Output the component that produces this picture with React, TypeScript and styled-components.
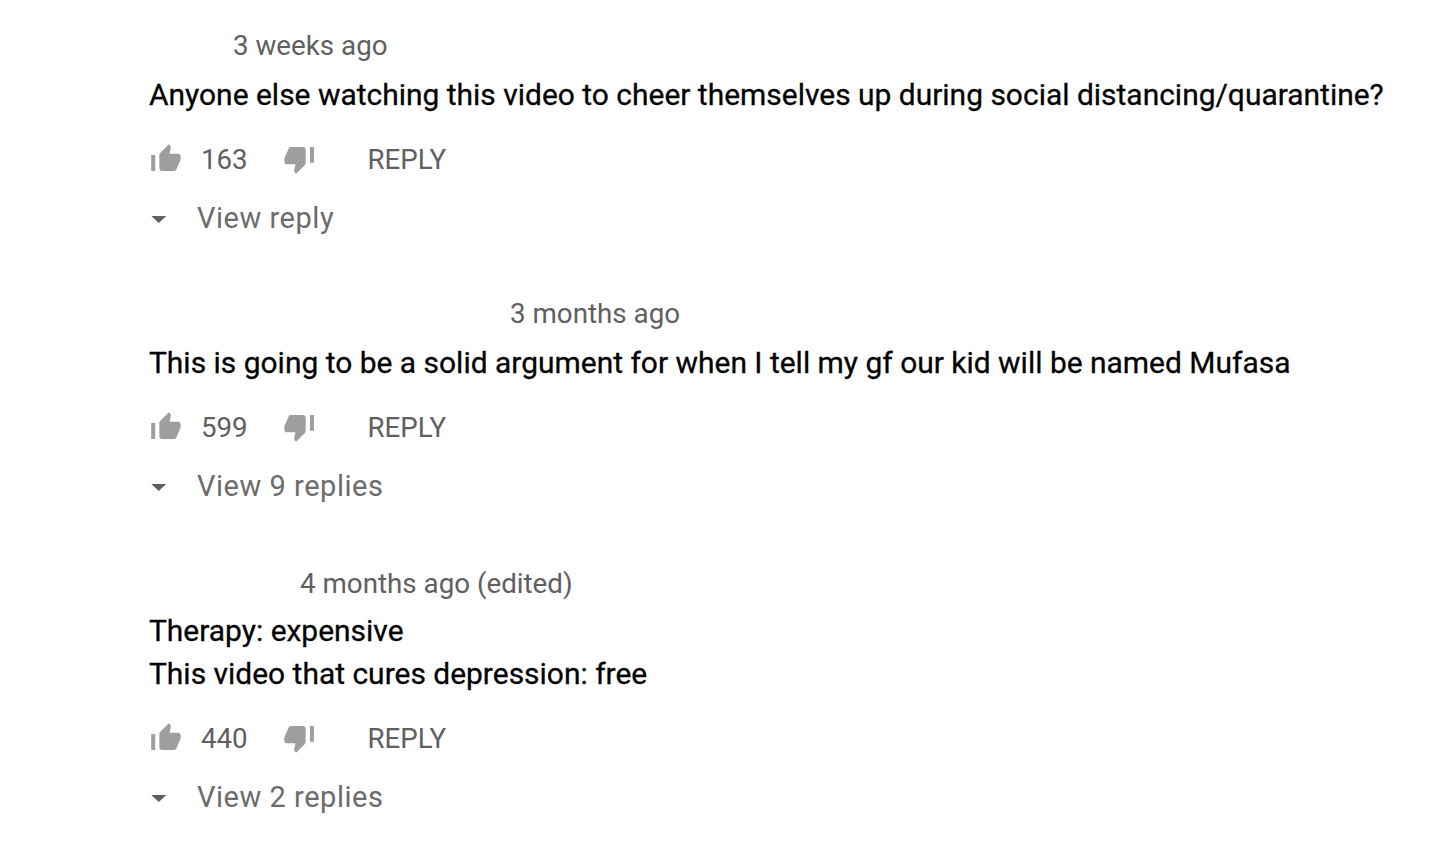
import React from 'react';
import styled, { createGlobalStyle } from 'styled-components';

const GlobalStyle = createGlobalStyle`
    body {
        margin: 0;
        background-color: #ffffff;
        font-family: Roboto, "Liberation Sans", sans-serif;
    }
`;

const CommentList = styled.main`
    box-sizing: border-box;
    width: 1442px;
    height: 848px;
    overflow: hidden;
    padding: 26px 0 0 149px;
`;

const CommentItem = styled.article<{ gap: number }>`
    margin-bottom: ${ props => props.gap }px;
`;

const CommentHeader = styled.header<{ indent: number }>`
    height: 40px;
    padding-left: ${ props => props.indent }px;
    color: #606060;
    font-size: 27.75px;
    line-height: 40px;
    white-space: nowrap;
`;

const CommentText = styled.p<{ offset: number }>`
    margin: ${ props => props.offset }px 0 0;
    color: #030303;
    font-size: 29.96px;
    line-height: 43px;
    white-space: pre;
    -webkit-text-stroke: 0.3px #030303;
`;

const Toolbar = styled.div`
    display: flex;
    align-items: center;
    height: 40px;
    margin-top: 23px;
    padding-left: 1px;
    color: #606060;
    font-size: 27.7px;
`;

const IconButton = styled.button`
    display: flex;
    width: 32px;
    height: 32px;
    padding: 0;
    border: 0;
    background: none;
    color: #9e9e9e;
`;

const LikeCount = styled.span`
    width: 101px;
    padding-left: 19px;
    box-sizing: border-box;
`;

const ReplyButton = styled.button`
    margin-left: 52.5px;
    padding: 0;
    border: 0;
    background: none;
    color: #606060;
    font: inherit;
`;

const RepliesButton = styled.button`
    display: flex;
    align-items: center;
    gap: 30px;
    height: 40px;
    margin-top: 19px;
    padding: 0 0 0 2px;
    border: 0;
    background: none;
    color: #6c6c6c;
    font: inherit;
    font-size: 29px;
    letter-spacing: 0.53px;
    white-space: nowrap;

    svg {
        margin-top: 3px;
    }
`;

const ThumbUp: React.FC = () => (
    <svg width="32" height="32" viewBox="0 0 24 24" fill="currentColor">
        <path d="M.9 21h3V9h-3v12zM23 10c0-1.1-.9-2-2-2h-6.31l.95-4.57.03-.32c0-.41-.17-.79-.44-1.06L14.17 1 7.59 7.59C7.22 7.95 7 8.45 7 9v10c0 1.1.9 2 2 2h9c.83 0 1.54-.5 1.84-1.22l3.02-7.05c.09-.23.14-.47.14-.73v-2z"/>
    </svg>
);

const ThumbDown: React.FC = () => (
    <svg width="32" height="32" viewBox="0 0 24 24" fill="currentColor">
        <path d="M15 3H6c-.83 0-1.54.5-1.84 1.22l-3.02 7.05c-.09.23-.14.47-.14.73v2c0 1.1.9 2 2 2h6.31l-.95 4.57-.03.32c0 .41.17.79.44 1.06L9.83 23l6.59-6.59c.36-.36.58-.86.58-1.41V5c0-1.1-.9-2-2-2zM20.2 3v11.8h3V3z"/>
    </svg>
);

const ArrowDown: React.FC = () => (
    <svg width="16" height="7" viewBox="0 0 16 7" fill="#606060">
        <path d="M.3 0h15L7.8 7z"/>
    </svg>
);

const comments = [
    { id: 1, indent: 84, offset: 7, gap: 56, date: '3 weeks ago', text: 'Anyone else watching this video to cheer themselves up during social distancing/quarantine?', likes: 163, replies: 'View reply' },
    { id: 2, indent: 361, offset: 7, gap: 58, date: '3 months ago', text: 'This is going to be a solid argument for when I tell my gf our kid will be named Mufasa', likes: 599, replies: 'View 9 replies' },
    { id: 3, indent: 151, offset: 5, gap: 0, date: '4 months ago (edited)', text: 'Therapy: expensive\nThis video that cures depression: free', likes: 440, replies: 'View 2 replies' },
];

const App: React.FC = () => {
    return (
        <>
            <GlobalStyle/>
            <CommentList>
                { comments.map(comment => (
                    <CommentItem key={ comment.id } gap={ comment.gap }>
                        <CommentHeader indent={ comment.indent }>{ comment.date }</CommentHeader>
                        <CommentText offset={ comment.offset }>{ comment.text }</CommentText>
                        <Toolbar>
                            <IconButton aria-label="Like"><ThumbUp/></IconButton>
                            <LikeCount>{ comment.likes }</LikeCount>
                            <IconButton aria-label="Dislike"><ThumbDown/></IconButton>
                            <ReplyButton>REPLY</ReplyButton>
                        </Toolbar>
                        <RepliesButton>
                            <ArrowDown/>
                            { comment.replies }
                        </RepliesButton>
                    </CommentItem>
                )) }
            </CommentList>
        </>
    )
}

export default App;
